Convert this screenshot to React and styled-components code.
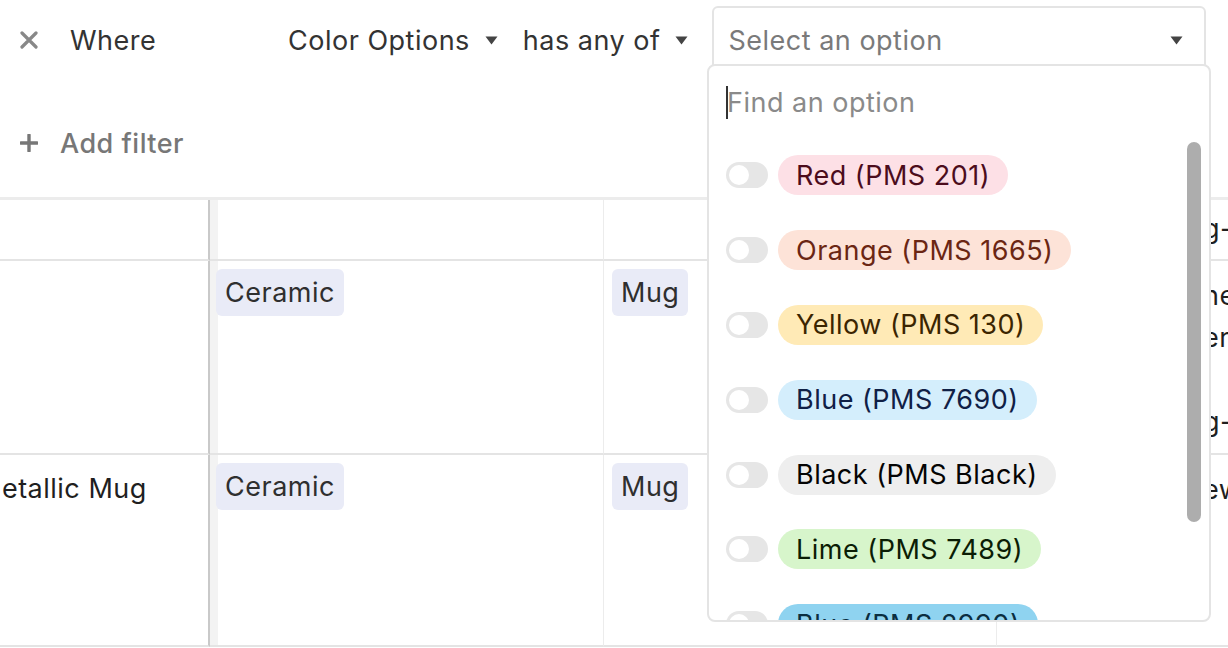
import React from "react";
import styled, { createGlobalStyle } from "styled-components";

const GlobalStyle = createGlobalStyle`
  html, body {
    margin: 0;
    padding: 0;
    background: #fff;
    overflow: hidden;
  }
  body {
    font-family: Inter, "Liberation Sans", sans-serif;
    letter-spacing: 0.5px;
    -webkit-font-smoothing: antialiased;
  }
`;

const S = {
  Page: styled.div`
    position: relative;
    width: 1228px;
    height: 648px;
    overflow: hidden;
    background: #fff;
  `,
  Filters: styled.div`
    display: flex;
    flex-direction: column;
    height: 197px;
    padding-left: 20px;
    box-sizing: border-box;
  `,
  FilterRow: styled.div`
    display: flex;
    align-items: center;
    height: 80px;
    font-size: 27px;
    color: #333;
  `,
  IconBtn: styled.span`
    display: flex;
    align-items: center;
    justify-content: center;
    width: 18px;
    height: 18px;
    color: ${(p) => p.color || "#888"};
  `,
  Conjunction: styled.span`
    width: 218px;
    margin-left: 32px;
  `,
  Picker: styled.span`
    display: flex;
    align-items: center;
    gap: 15px;
    margin-right: ${(p) => p.gapRight || 25}px;
  `,
  Select: styled.div`
    display: flex;
    align-items: center;
    justify-content: space-between;
    width: 494px;
    height: 68px;
    padding: 0 21px 0 14px;
    box-sizing: border-box;
    border: 2px solid #e4e4e4;
    border-radius: 6px;
    color: #7a7a7a;
  `,
  AddRow: styled.div`
    display: flex;
    align-items: center;
    gap: 22px;
    height: 46px;
    margin-top: 40px;
    font-size: 27px;
    font-weight: 500;
    color: #777;
  `,
  Table: styled.div`
    display: grid;
    grid-template-columns: 240px 394px 393px 400px;
    grid-template-rows: 61px 194px 192px;
    margin-left: -30px;
    border-top: 3px solid #ececec;
    font-size: 27px;
    color: #1f1f1f;
  `,
  Cell: styled.div`
    box-sizing: border-box;
    border-bottom: 2px solid #e4e4e4;
    border-right: ${(p) => (p.frozen ? "2px solid #c9c9c9" : "1px solid #ececec")};
    padding: ${(p) => (p.pad ? p.pad : "8px 7px")};
    background: ${(p) =>
      p.shaded ? "linear-gradient(to right, #f3f3f3 0, #f3f3f3 8px, #fff 8px)" : "#fff"};
    overflow: hidden;
    white-space: nowrap;
  `,
  Line: styled.div`
    height: ${(p) => p.h || 42}px;
    line-height: ${(p) => p.h || 42}px;
  `,
  Tag: styled.span`
    display: inline-flex;
    align-items: center;
    height: 47px;
    padding: 0 9px;
    border-radius: 6px;
    background: #e9ebf7;
    color: #2f2f2f;
  `,
  Popover: styled.div`
    position: absolute;
    top: 64px;
    left: 707px;
    width: 504px;
    height: 558px;
    box-sizing: border-box;
    border: 2px solid #e4e4e4;
    border-radius: 8px;
    background: #fff;
    overflow: hidden;
    font-size: 27px;
  `,
  Search: styled.div`
    display: flex;
    align-items: center;
    height: 72px;
    padding-left: 17px;
    color: #8a8a8a;
  `,
  Caret: styled.span`
    width: 2px;
    height: 33px;
    margin-right: -1px;
    background: #333;
  `,
  List: styled.div`
    display: flex;
    flex-direction: column;
  `,
  Option: styled.div`
    display: flex;
    align-items: center;
    gap: 10px;
    height: 74.8px;
    padding-left: 17px;
    flex-shrink: 0;
  `,
  Toggle: styled.span`
    position: relative;
    width: 42px;
    height: 26px;
    border-radius: 13px;
    background: #e6e6e6;
    &::after {
      content: "";
      position: absolute;
      top: 3px;
      left: 3px;
      width: 20px;
      height: 20px;
      border-radius: 50%;
      background: #fff;
    }
  `,
  Pill: styled.span`
    display: inline-flex;
    align-items: center;
    height: 40px;
    padding: 0 18px;
    border-radius: 20px;
    background: ${(p) => p.bg};
    color: ${(p) => p.fg};
  `,
  Thumb: styled.div`
    position: absolute;
    top: 76px;
    right: 8px;
    width: 14px;
    height: 380px;
    border-radius: 7px;
    background: #adadad;
  `,
};

const Triangle = () => (
  <svg width="13" height="9" viewBox="0 0 13 9">
    <path d="M0.5 0.5 H12.5 L6.5 8.5 Z" fill="#444" />
  </svg>
);

const XIcon = () => (
  <svg width="18" height="18" viewBox="0 0 18 18">
    <path d="M2 2 L16 16 M16 2 L2 16" stroke="currentColor" strokeWidth="3.2" strokeLinecap="round" />
  </svg>
);

const PlusIcon = () => (
  <svg width="18" height="18" viewBox="0 0 18 18">
    <path d="M9 1 V17 M1 9 H17" stroke="currentColor" strokeWidth="3.4" strokeLinecap="round" />
  </svg>
);

const options = [
  { label: "Red (PMS 201)", bg: "#fde0e6", fg: "#4c0c1c" },
  { label: "Orange (PMS 1665)", bg: "#fde3d8", fg: "#6b2613" },
  { label: "Yellow (PMS 130)", bg: "#ffeab6", fg: "#3b2501" },
  { label: "Blue (PMS 7690)", bg: "#d4eefc", fg: "#102046" },
  { label: "Black (PMS Black)", bg: "#eeeeee", fg: "#040404" },
  { label: "Lime (PMS 7489)", bg: "#d7f5cb", fg: "#0b1d05" },
  { label: "Blue (PMS 2990)", bg: "#8fd3f0", fg: "#0b2e40" },
];

const App = () => {
  return (
    <S.Page>
      <GlobalStyle />
      <S.Filters>
        <S.FilterRow>
          <S.IconBtn>
            <XIcon />
          </S.IconBtn>
          <S.Conjunction>Where</S.Conjunction>
          <S.Picker>
            Color Options <Triangle />
          </S.Picker>
          <S.Picker gapRight={24}>
            has any of <Triangle />
          </S.Picker>
          <S.Select>
            <span>Select an option</span>
            <Triangle />
          </S.Select>
        </S.FilterRow>
        <S.AddRow>
          <S.IconBtn color="#777">
            <PlusIcon />
          </S.IconBtn>
          Add filter
        </S.AddRow>
      </S.Filters>

      <S.Table>
        <S.Cell frozen />
        <S.Cell shaded />
        <S.Cell />
        {/* last column sits mostly under the popover */}
        <S.Cell pad="8px 0 0 206px">
          <S.Line>g-free</S.Line>
        </S.Cell>

        <S.Cell frozen />
        <S.Cell shaded pad="8px 6px">
          <S.Tag>Ceramic</S.Tag>
        </S.Cell>
        <S.Cell pad="8px 8px">
          <S.Tag>Mug</S.Tag>
        </S.Cell>
        <S.Cell pad="14px 0 0 206px">
          <S.Line>new</S.Line>
          <S.Line>era</S.Line>
          <S.Line />
          <S.Line>g-safe</S.Line>
        </S.Cell>

        <S.Cell frozen pad="17px 0 0 7px">
          <S.Line h={34}>Metallic Mug</S.Line>
        </S.Cell>
        <S.Cell shaded pad="8px 6px">
          <S.Tag>Ceramic</S.Tag>
        </S.Cell>
        <S.Cell pad="8px 8px">
          <S.Tag>Mug</S.Tag>
        </S.Cell>
        <S.Cell pad="14px 0 0 206px">
          <S.Line>ew</S.Line>
        </S.Cell>
      </S.Table>

      <S.Popover>
        <S.Search>
          <S.Caret />
          Find an option
        </S.Search>
        <S.List>
          {options.map((o) => (
            <S.Option key={o.label}>
              <S.Toggle />
              <S.Pill bg={o.bg} fg={o.fg}>
                {o.label}
              </S.Pill>
            </S.Option>
          ))}
        </S.List>
        <S.Thumb />
      </S.Popover>
    </S.Page>
  );
};

export default App;
